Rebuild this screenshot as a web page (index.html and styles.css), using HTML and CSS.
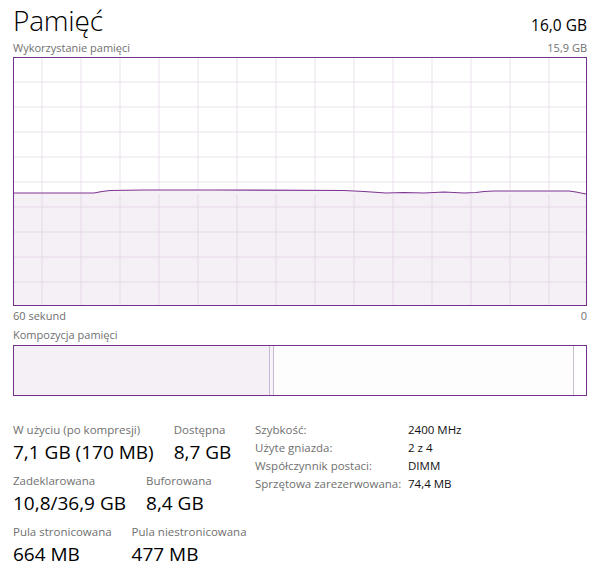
FILE: index.html
```html
<!DOCTYPE html>
<html lang="pl">
<head>
    <meta charset="UTF-8">
    <title>Pamięć</title>
    <link rel="stylesheet" href="styles.css">
</head>
<body>
    <div class="panel">
        <div class="head">
            <h1>Pamięć</h1>
            <span class="total">16,0 GB</span>
        </div>
        <div class="caption">
            <span>Wykorzystanie pamięci</span>
            <span>15,9 GB</span>
        </div>

        <div class="graph">
            <svg viewBox="0 0 572 247" preserveAspectRatio="none">
                <g class="grid">
                    <line x1="28" y1="0" x2="28" y2="247"/>
                    <line x1="67" y1="0" x2="67" y2="247"/>
                    <line x1="106" y1="0" x2="106" y2="247"/>
                    <line x1="145" y1="0" x2="145" y2="247"/>
                    <line x1="184" y1="0" x2="184" y2="247"/>
                    <line x1="223" y1="0" x2="223" y2="247"/>
                    <line x1="262" y1="0" x2="262" y2="247"/>
                    <line x1="301" y1="0" x2="301" y2="247"/>
                    <line x1="340" y1="0" x2="340" y2="247"/>
                    <line x1="379" y1="0" x2="379" y2="247"/>
                    <line x1="418" y1="0" x2="418" y2="247"/>
                    <line x1="457" y1="0" x2="457" y2="247"/>
                    <line x1="496" y1="0" x2="496" y2="247"/>
                    <line x1="535" y1="0" x2="535" y2="247"/>
                    <line x1="0" y1="24" x2="572" y2="24"/>
                    <line x1="0" y1="49" x2="572" y2="49"/>
                    <line x1="0" y1="74" x2="572" y2="74"/>
                    <line x1="0" y1="99" x2="572" y2="99"/>
                    <line x1="0" y1="124" x2="572" y2="124"/>
                    <line x1="0" y1="149" x2="572" y2="149"/>
                    <line x1="0" y1="174" x2="572" y2="174"/>
                    <line x1="0" y1="199" x2="572" y2="199"/>
                    <line x1="0" y1="224" x2="572" y2="224"/>
                </g>
                <polygon class="area" points="0,135 80,135 88,133.5 96,132.5 130,132 200,132 330,132.5 350,133.5 372,135 390,134.5 410,135 430,134 450,135 462,134.5 470,133.5 480,133 555,133 562,134 572,136 572,247 0,247"/>
                <g class="grid grid-over">
                    <line x1="28" y1="136" x2="28" y2="247"/>
                    <line x1="67" y1="136" x2="67" y2="247"/>
                    <line x1="106" y1="136" x2="106" y2="247"/>
                    <line x1="145" y1="136" x2="145" y2="247"/>
                    <line x1="184" y1="136" x2="184" y2="247"/>
                    <line x1="223" y1="136" x2="223" y2="247"/>
                    <line x1="262" y1="136" x2="262" y2="247"/>
                    <line x1="301" y1="136" x2="301" y2="247"/>
                    <line x1="340" y1="136" x2="340" y2="247"/>
                    <line x1="379" y1="136" x2="379" y2="247"/>
                    <line x1="418" y1="136" x2="418" y2="247"/>
                    <line x1="457" y1="136" x2="457" y2="247"/>
                    <line x1="496" y1="136" x2="496" y2="247"/>
                    <line x1="535" y1="136" x2="535" y2="247"/>
                    <line x1="0" y1="149" x2="572" y2="149"/>
                    <line x1="0" y1="174" x2="572" y2="174"/>
                    <line x1="0" y1="199" x2="572" y2="199"/>
                    <line x1="0" y1="224" x2="572" y2="224"/>
                </g>
                <polyline class="usage" points="0,135 80,135 88,133.5 96,132.5 130,132 200,132 330,132.5 350,133.5 372,135 390,134.5 410,135 430,134 450,135 462,134.5 470,133.5 480,133 555,133 562,134 572,136"/>
            </svg>
        </div>
        <div class="caption axis">
            <span>60 sekund</span>
            <span>0</span>
        </div>

        <div class="caption">
            <span>Kompozycja pamięci</span>
        </div>
        <div class="composition">
            <div class="seg in-use"></div>
            <div class="seg modified"></div>
            <div class="seg standby"></div>
            <div class="seg free"></div>
        </div>

        <div class="details">
            <div class="stats">
                <div class="stat-row">
                    <div class="stat">
                        <div class="label">W użyciu (po kompresji)</div>
                        <div class="value">7,1 GB (170 MB)</div>
                    </div>
                    <div class="stat">
                        <div class="label">Dostępna</div>
                        <div class="value">8,7 GB</div>
                    </div>
                </div>
                <div class="stat-row">
                    <div class="stat">
                        <div class="label">Zadeklarowana</div>
                        <div class="value">10,8/36,9 GB</div>
                    </div>
                    <div class="stat">
                        <div class="label">Buforowana</div>
                        <div class="value">8,4 GB</div>
                    </div>
                </div>
                <div class="stat-row">
                    <div class="stat">
                        <div class="label">Pula stronicowana</div>
                        <div class="value">664 MB</div>
                    </div>
                    <div class="stat">
                        <div class="label">Pula niestronicowana</div>
                        <div class="value">477 MB</div>
                    </div>
                </div>
            </div>

            <table class="props">
                <tr><td>Szybkość:</td><td>2400 MHz</td></tr>
                <tr><td>Użyte gniazda:</td><td>2 z 4</td></tr>
                <tr><td>Współczynnik postaci:</td><td>DIMM</td></tr>
                <tr><td>Sprzętowa zarezerwowana:</td><td>74,4 MB</td></tr>
            </table>
        </div>
    </div>
</body>
</html>
```

FILE: styles.css
```css
body {
    margin: 0;
    padding: 0;
    background: #fff;
    color: #000;
    font-family: 'Open Sans', 'Noto Sans', sans-serif;
}
.panel {
    padding: 0 9px 0 13px;
}
.head {
    display: flex;
    justify-content: space-between;
    align-items: baseline;
    height: 40px;
}
h1 {
    margin: 0;
    font-size: 28px;
    font-weight: 300;
    line-height: 40px;
    letter-spacing: -0.2px;
}
.total {
    font-size: 15.5px;
    font-weight: 400;
}
.caption {
    display: flex;
    justify-content: space-between;
    font-size: 11px;
    color: #707070;
    line-height: 15px;
    height: 17px;
}
.axis {
    height: 21px;
    line-height: 20px;
}
.graph {
    height: 249px;
    border: 1px solid #74338a;
    box-sizing: border-box;
}
.graph svg {
    display: block;
    width: 100%;
    height: 100%;
}
.grid line {
    stroke: #ebe0ed;
    stroke-width: 1;
}
.area {
    fill: #f5eff6;
}
.grid-over line {
    stroke: #e5d9e8;
}
.usage {
    fill: none;
    stroke: #7e3592;
    stroke-width: 1.2;
}
.composition {
    display: flex;
    height: 51px;
    margin-top: 1px;
    border: 1px solid #74338a;
    box-sizing: border-box;
}
.seg {
    height: 100%;
}
.in-use {
    width: 255px;
    background: #f4f0f6;
    border-right: 1px solid #cbb6d3;
}
.modified {
    width: 3px;
    background: #f7f4f8;
    border-right: 1px solid #cbb6d3;
}
.standby {
    flex: 1;
    background: #fefdfe;
    border-right: 1px solid #c9bccf;
}
.free {
    width: 12px;
    background: #fff;
}
.details {
    display: flex;
    align-items: flex-start;
    margin-top: 26px;
}
.stats {
    width: 242px;
}
.stat-row {
    display: flex;
    gap: 20px;
    margin-bottom: 7px;
}
.label {
    font-size: 11.5px;
    color: #707070;
    line-height: 16px;
}
.value {
    font-size: 19px;
    line-height: 28px;
}
.props {
    border-collapse: collapse;
    font-size: 11.5px;
    margin-top: -1px;
}
.props td {
    padding: 0;
    height: 18px;
    line-height: 18px;
    color: #111;
}
.props td:first-child {
    color: #707070;
    width: 153px;
}
```
